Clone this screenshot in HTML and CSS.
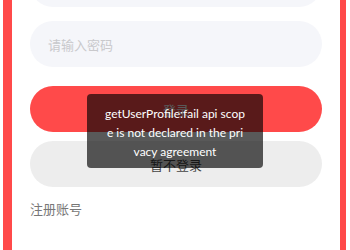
FILE: index.html
```html
<!DOCTYPE html>
<html lang="zh">
<head>
<meta charset="utf-8">
<link rel="stylesheet" href="styles.css">
</head>
<body>
<div class="frame">
  <div class="form">
    <div class="field"><span class="placeholder">请输入手机号</span></div>
    <div class="field field-gap"><span class="placeholder">请输入密码</span></div>
    <div class="btn btn-primary">登录</div>
    <div class="btn btn-secondary">暂不登录</div>
    <div class="link">注册账号</div>
  </div>
  <div class="toast">getUserProfile:fail api scop<br>e is not declared in the pri<br>vacy agreement</div>
</div>
</body>
</html>
```
FILE: styles.css
```css
html, body {
  margin: 0;
  padding: 0;
  background: #ffffff;
  overflow: hidden;
}
body {
  font-family: "Noto Sans CJK SC", "Noto Sans", sans-serif;
}
.frame {
  position: relative;
  display: flow-root;
  margin-left: 3px;
  width: 343px;
  height: 250px;
  box-sizing: border-box;
  border-left: 9px solid #ff4a4a;
  border-right: 6px solid #ff4a4a;
  background: #ffffff;
  padding: 0 18px;
  overflow: hidden;
}
.form {
  display: flex;
  flex-direction: column;
  margin-top: -39px;
}
.field {
  height: 46px;
  border-radius: 23px;
  background: #f5f6fa;
  display: flex;
  align-items: center;
  padding-left: 18px;
}
.field-gap {
  margin-top: 14px;
}
.placeholder {
  font-size: 13px;
  color: #c9c9cc;
}
.btn {
  height: 46px;
  border-radius: 23px;
  display: flex;
  align-items: center;
  justify-content: center;
  font-size: 13px;
}
.btn-primary {
  margin-top: 19px;
  background: #ff4a4a;
  color: #ffffff;
}
.btn-secondary {
  margin-top: 9px;
  background: #ededed;
  color: #444444;
}
.link {
  margin-top: 13px;
  font-size: 13px;
  line-height: 18px;
  color: #777777;
}
.toast {
  position: absolute;
  left: 75px;
  top: 94px;
  width: 176px;
  height: 74px;
  box-sizing: border-box;
  padding: 10px 4px 0;
  border-radius: 4px;
  background: rgba(0, 0, 0, 0.65);
  color: #ffffff;
  font-family: Lato, "Open Sans", sans-serif;
  font-size: 12px;
  line-height: 19px;
  text-align: center;
  white-space: nowrap;
}
```
